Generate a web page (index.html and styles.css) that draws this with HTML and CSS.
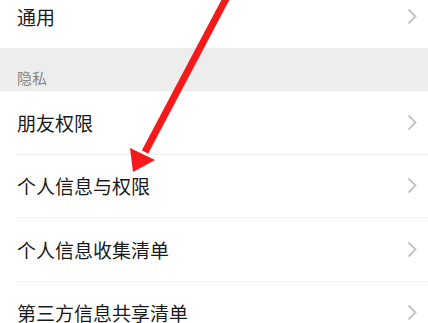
FILE: index.html
```html
<!DOCTYPE html>
<html lang="zh-CN">
<head>
<meta charset="utf-8">
<title>设置</title>
<link rel="stylesheet" href="styles.css">
</head>
<body>
<div class="page">
  <div class="list">
    <div class="row first"><span class="label">通用</span><svg class="chev" viewBox="0 0 10 17"><path d="M1.5 1.5 L8.5 8.5 L1.5 15.5"/></svg></div>
    <div class="section">隐私</div>
    <div class="row"><span class="label">朋友权限</span><svg class="chev" viewBox="0 0 10 17"><path d="M1.5 1.5 L8.5 8.5 L1.5 15.5"/></svg></div>
    <div class="row"><span class="label">个人信息与权限</span><svg class="chev" viewBox="0 0 10 17"><path d="M1.5 1.5 L8.5 8.5 L1.5 15.5"/></svg></div>
    <div class="row"><span class="label">个人信息收集清单</span><svg class="chev" viewBox="0 0 10 17"><path d="M1.5 1.5 L8.5 8.5 L1.5 15.5"/></svg></div>
    <div class="row"><span class="label">第三方信息共享清单</span><svg class="chev" viewBox="0 0 10 17"><path d="M1.5 1.5 L8.5 8.5 L1.5 15.5"/></svg></div>
  </div>
  <svg class="arrow" viewBox="0 0 428 323" width="428" height="323">
    <line x1="228" y1="-5" x2="145" y2="152" />
    <polygon points="130,148 155,160 133,172" />
  </svg>
</div>
</body>
</html>
```

FILE: styles.css
```css
html, body {
  margin: 0;
  padding: 0;
  background: #ffffff;
}
.page {
  position: relative;
  width: 428px;
  height: 323px;
  overflow: hidden;
  font-family: "Noto Sans CJK SC", "Noto Sans", sans-serif;
}
.list {
  margin-top: -15.5px;
  display: flex;
  flex-direction: column;
}
.row {
  height: 62.5px;
  display: flex;
  align-items: center;
  justify-content: space-between;
  padding: 0 11px 0 17px;
  background: #fff;
  position: relative;
}
.row + .row::before {
  content: "";
  position: absolute;
  left: 16px;
  right: 0;
  top: -1px;
  height: 1px;
  background: #efefef;
}
.row + .row {
  margin-top: 1px;
}
.first {
  height: 63.5px;
}
.label {
  font-size: 19px;
  color: #1a1a1a;
  line-height: 1;
}
.chev {
  width: 10px;
  height: 17px;
  fill: none;
  stroke: #c2c2c2;
  stroke-width: 1.8;
}
.section {
  height: 43px;
  background: #ededed;
  box-sizing: border-box;
  padding: 0 0 6px 17px;
  display: flex;
  align-items: flex-end;
  font-size: 15px;
  line-height: 1;
  color: #868686;
}
.arrow {
  position: absolute;
  left: 0;
  top: 0;
}
.arrow line {
  stroke: #f5191a;
  stroke-width: 7;
}
.arrow polygon {
  fill: #f5191a;
}
```
